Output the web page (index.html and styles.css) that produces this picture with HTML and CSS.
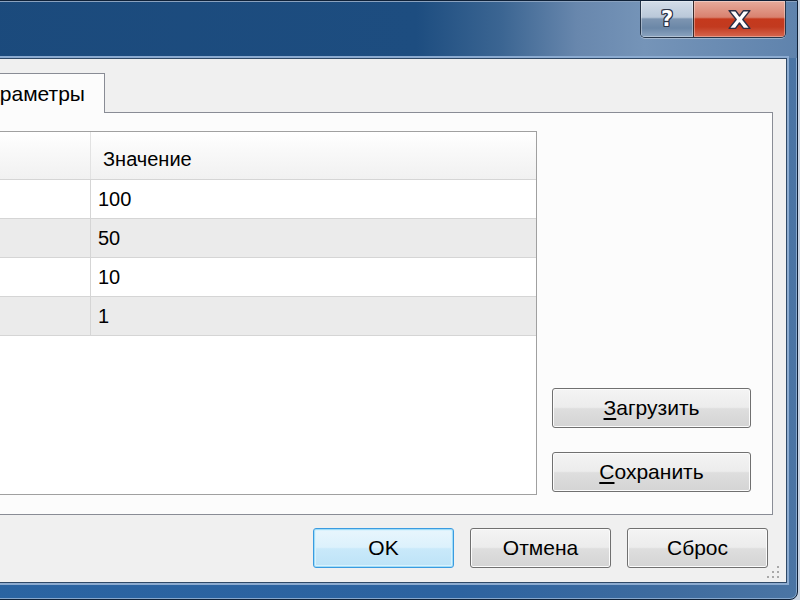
FILE: index.html
```html
<!DOCTYPE html>
<html lang="ru">
<head>
  <meta charset="UTF-8" />
  <title>Параметры</title>
  <link rel="stylesheet" href="styles.css">
</head>
<body>

<div class="window">
  <div class="titlebar">
    <div class="caption-btns">
      <div class="cap-btn help-btn"><span>?</span></div>
      <div class="cap-btn close-btn">
        <svg width="25" height="21" viewBox="0 0 24 20">
          <path d="M2 1.5 H8.2 L12 6.6 L15.8 1.5 H22 L15.2 10 L22 18.5 H15.8 L12 13.4 L8.2 18.5 H2 L8.8 10 Z" fill="#fff" stroke="#2b2f45" stroke-width="1.4" stroke-linejoin="round"/>
        </svg>
      </div>
    </div>
  </div>

  <div class="frame">
    <div class="client">
      <div class="tabs">
        <div class="tab active">Параметры</div>
      </div>

      <div class="tab-page">
        <div class="grid">
          <div class="grid-row grid-head"><div class="cell"></div><div class="cell">Значение</div></div>
          <div class="grid-row"><div class="cell"></div><div class="cell">100</div></div>
          <div class="grid-row alt"><div class="cell"></div><div class="cell">50</div></div>
          <div class="grid-row"><div class="cell"></div><div class="cell">10</div></div>
          <div class="grid-row alt"><div class="cell"></div><div class="cell">1</div></div>
        </div>
        <div class="side-btns">
          <button class="btn wide"><u>З</u>агрузить</button>
          <button class="btn wide"><u>С</u>охранить</button>
        </div>
      </div>

      <div class="footer">
        <button class="btn default">OK</button>
        <button class="btn">Отмена</button>
        <button class="btn">Сброс</button>
      </div>

      <!-- size grip -->
      <svg class="grip" width="14" height="14" viewBox="0 0 14 14">
        <rect x="10" y="0" width="2" height="2" fill="#a9a9a9"/>
        <rect x="5" y="5" width="2" height="2" fill="#a9a9a9"/>
        <rect x="10" y="5" width="2" height="2" fill="#a9a9a9"/>
        <rect x="0" y="10" width="2" height="2" fill="#a9a9a9"/>
        <rect x="5" y="10" width="2" height="2" fill="#a9a9a9"/>
        <rect x="10" y="10" width="2" height="2" fill="#a9a9a9"/>
      </svg>
    </div>
  </div>
</div>

</body>
</html>
```

FILE: styles.css
```css
html, body {
  margin: 0;
  height: 100%;
  overflow: hidden;
}
body {
  background: #c9d4e2;
  font-family: "Liberation Sans", Arial, sans-serif;
  font-size: 20px;
  color: #000;
}

/* window frame */
.window {
  margin-left: -50px;
  width: 848px;
  height: 600px;
  box-sizing: border-box;
  border: 1px solid #0f2138;
  border-radius: 0 0 8px 8px;
  display: flex;
  flex-direction: column;
  background: linear-gradient(90deg, #2a64a2 0%, #2d63a0 60%, #3f6c9f 85%, #4b75a4 100%);
  box-shadow: inset 0 -1px 0 #86a7cc, inset -1px 0 0 #86a7cc;
  overflow: hidden;
}
.titlebar {
  height: 56px;
  border-top: 1px solid #8aa2bf;
  display: flex;
  justify-content: flex-end;
  align-items: flex-start;
  padding-right: 11px;
  background: linear-gradient(90deg, #1b4a7c 0%, #1d4d80 55%, #3b6592 65%, #6887ad 74%, #7594b8 82%, #5f83ad 100%);
}
.caption-btns {
  margin-top: -1px;
  display: flex;
  height: 37px;
  box-sizing: border-box;
  border: 1px solid #26364b;
  border-top: none;
  border-radius: 0 0 5px 5px;
  overflow: hidden;
  box-shadow: 0 1px 0 rgba(255, 255, 255, 0.35);
}
.cap-btn {
  display: flex;
  align-items: center;
  justify-content: center;
  box-shadow: inset 0 0 0 1px rgba(255, 255, 255, 0.35);
}
.help-btn {
  width: 52px;
  background: linear-gradient(#d3dde9 0%, #b9c8d9 45%, #7d95b1 50%, #6b87a7 75%, #8ba4c0 100%);
}
.help-btn span {
  font-family: "DejaVu Sans", sans-serif;
  font-weight: bold;
  font-size: 21px;
  color: #fff;
  text-shadow: 1px 0 0 #2b3448, -1px 0 0 #2b3448, 0 1px 0 #2b3448, 0 -1px 0 #2b3448,
    1px 1px 0 #2b3448, -1px -1px 0 #2b3448, 1px -1px 0 #2b3448, -1px 1px 0 #2b3448;
}
.close-btn {
  width: 91px;
  border-left: 1px solid #3a2a2a;
  background: linear-gradient(#e7ab9c 0%, #d9826f 45%, #c5391d 50%, #c23a1f 72%, #d6674f 100%);
}

.frame {
  flex: 1;
  display: flex;
  padding: 0 10px 16px 8px;
}
.client {
  flex: 1;
  position: relative;
  display: flex;
  flex-direction: column;
  background: #f0f0f0;
  border: 1px solid #2f4967;
  box-shadow: 0 0 0 2px #8cabd0;
}

/* tabs */
.tabs {
  display: flex;
  padding: 14px 0 0 4px;
}
.tab {
  width: 141px;
  height: 40px;
  box-sizing: border-box;
  line-height: 40px;
  padding-left: 8px;
  font-size: 21px;
  border: 1px solid #898c95;
  border-bottom: none;
  background: #fcfcfc;
  margin-bottom: -1px;
  position: relative;
  z-index: 1;
}
.tab-page {
  height: 403px;
  box-sizing: border-box;
  margin: 0 13px 0 4px;
  border: 1px solid #898c95;
  background: #fcfcfc;
  display: flex;
  gap: 15px;
  padding: 18px 21px 19px 7px;
}

/* data grid */
.grid {
  flex: 1;
  border: 1px solid #a0a0a0;
  background: #fff;
  display: flex;
  flex-direction: column;
}
.grid-row {
  display: grid;
  grid-template-columns: 118px 1fr;
  height: 39px;
  box-sizing: border-box;
  border-bottom: 1px solid #d5d5d5;
}
.grid-row.alt { background: #ebebeb; }
.grid-head {
  height: 48px;
  background: linear-gradient(#ffffff 0%, #f9f9f9 40%, #f1f1f1 100%);
}
.cell {
  display: flex;
  align-items: center;
  padding-left: 7px;
  border-right: 1px solid #d5d5d5;
}
.cell:last-child { border-right: none; }
.grid-head .cell {
  padding: 7px 0 0 12px;
  border-right-color: #e2e2e2;
}

/* buttons */
.side-btns {
  width: 199px;
  display: flex;
  flex-direction: column;
  justify-content: flex-end;
  gap: 24px;
  padding-bottom: 3px;
}
.btn {
  width: 141px;
  height: 40px;
  padding: 0;
  font: inherit;
  font-size: 21px;
  color: #000;
  border: 1px solid #707070;
  border-radius: 3px;
  background: linear-gradient(#f4f4f4 0%, #ececec 48%, #dedede 52%, #d4d4d4 100%);
  box-shadow: inset 0 0 0 1px #fbfbfb;
}
.btn.wide { width: 199px; }
.btn u { text-underline-offset: 3px; }
.btn.default {
  border-color: #3a9be0;
  background: linear-gradient(#e8f6fd 0%, #dcf1fc 48%, #c9e9fa 52%, #bde3f7 100%);
  box-shadow: inset 0 0 0 1px #9fdcf8, inset 0 0 0 2px #d9f2fd;
}
.footer {
  display: flex;
  justify-content: flex-end;
  gap: 16px;
  padding: 13px 18px 0 0;
}
.grip {
  position: absolute;
  right: 5px;
  bottom: 2px;
}
```
